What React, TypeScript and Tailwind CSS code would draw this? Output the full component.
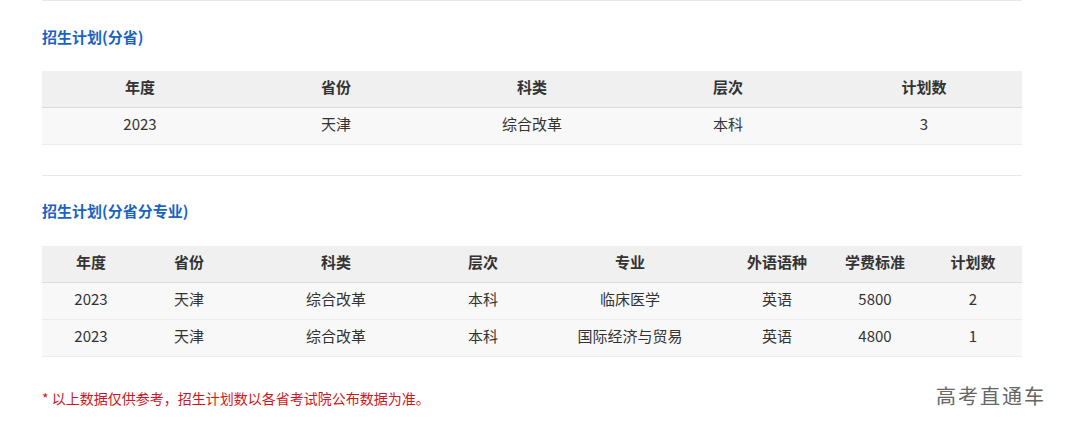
const FONT = { fontFamily: '"Microsoft YaHei", "Noto Sans CJK SC", "Noto Sans", sans-serif' };

type Col = { label: string; span: number };

const PROV_COLS: Col[] = [
  { label: "年度", span: 1 },
  { label: "省份", span: 1 },
  { label: "科类", span: 1 },
  { label: "层次", span: 1 },
  { label: "计划数", span: 1 },
];
const PROV_ROWS = [["2023", "天津", "综合改革", "本科", "3"]];

const MAJOR_COLS: Col[] = [
  { label: "年度", span: 1 },
  { label: "省份", span: 1 },
  { label: "科类", span: 2 },
  { label: "层次", span: 1 },
  { label: "专业", span: 2 },
  { label: "外语语种", span: 1 },
  { label: "学费标准", span: 1 },
  { label: "计划数", span: 1 },
];
const MAJOR_ROWS = [
  ["2023", "天津", "综合改革", "本科", "临床医学", "英语", "5800", "2"],
  ["2023", "天津", "综合改革", "本科", "国际经济与贸易", "英语", "4800", "1"],
];

function Tabla({ cols, rows, units }: { cols: Col[]; rows: string[][]; units: number }) {
  const template = { gridTemplateColumns: cols.map((c) => `${(c.span * 100) / units}%`).join(" ") };
  return (
    <div className="w-full text-[15px] text-[#333]">
      <div className="grid h-[37px] items-center border-b border-[#dcdcdc] bg-[#f0f0f0] pb-[3px] font-bold" style={template}>
        {cols.map((c) => (
          <div key={c.label} className="text-center">{c.label}</div>
        ))}
      </div>
      {rows.map((r, i) => (
        <div key={i} className="grid h-[37px] items-center border-b border-[#ececec] bg-[#f8f8f8] pb-[3px]" style={template}>
          {r.map((v, j) => (
            <div key={j} className="text-center">{v}</div>
          ))}
        </div>
      ))}
    </div>
  );
}

export default function App() {
  return (
    <div className="relative h-[437px] w-[1073px] overflow-hidden bg-white" style={FONT}>
      <div className="ml-[42px] w-[980px]">
        <section className="border-t border-[#e8e8e8] pt-[26px]">
          <h2 className="h-5 text-[15px] font-bold leading-5 text-[#1a62c4]">招生计划(分省)</h2>
          <div className="mt-[24px]">
            <Tabla cols={PROV_COLS} rows={PROV_ROWS} units={5} />
          </div>
        </section>
        <section className="mt-[30px] border-t border-[#e8e8e8] pt-[25px]">
          <h2 className="h-5 text-[15px] font-bold leading-5 text-[#1a62c4]">招生计划(分省分专业)</h2>
          <div className="mt-[25px]">
            <Tabla cols={MAJOR_COLS} rows={MAJOR_ROWS} units={10} />
          </div>
        </section>
        <p className="mt-[31px] text-[14px] leading-5 text-[#d0151d]">* 以上数据仅供参考，招生计划数以各省考试院公布数据为准。</p>
      </div>
      <div className="absolute right-[27px] top-[382px] text-[20px] leading-7 tracking-[2px] text-[#666]">高考直通车</div>
    </div>
  );
}
